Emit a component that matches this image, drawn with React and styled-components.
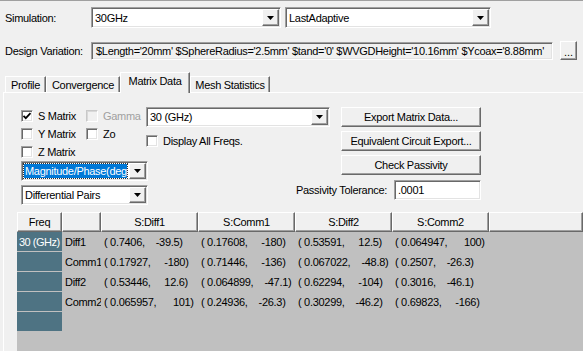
import React from 'react';
import styled, { createGlobalStyle, css } from 'styled-components';

const GlobalStyle = createGlobalStyle`
  html, body { margin: 0; padding: 0; background: #f0f0f0; }
  body {
    font-family: "Liberation Sans", Arial, sans-serif;
    font-size: 11px;
    letter-spacing: -0.3px;
    color: #000;
  }
  * { box-sizing: border-box; }
`;

const sunken = css`
  border: 1px solid;
  border-color: #a0a0a0 #fff #fff #a0a0a0;
  box-shadow: inset 1px 1px #696969, inset -1px -1px #e3e3e3;
`;

const raised = css`
  background: #f0f0f0;
  border: 1px solid;
  border-color: #fff #696969 #696969 #fff;
  box-shadow: inset -1px -1px #a0a0a0;
`;

const Window = styled.div`
  width: 583px;
  height: 351px;
  overflow: hidden;
  display: flex;
  flex-direction: column;
  background: #f0f0f0;
  border-top: 1px solid #a0a0a0;
`;

const FieldRow = styled.div`
  display: flex;
  align-items: center;
  flex: none;
  height: ${(p) => p.$h}px;
  margin-top: ${(p) => p.$top}px;
  padding-left: 5px;
`;

const Label = styled.span`
  width: 86px;
  flex: none;
  white-space: nowrap;
`;

const Combo = styled.div`
  ${sunken};
  display: flex;
  flex: none;
  width: ${(p) => p.$w}px;
  height: ${(p) => p.$h || 21}px;
  margin-right: ${(p) => p.$mr || 0}px;
  padding: 1px;
  background: #fff;
`;

const ComboText = styled.div`
  flex: 1;
  min-width: 0;
  display: flex;
  align-items: center;
  padding-left: 2px;
  white-space: nowrap;
  overflow: hidden;
  ${(p) =>
    p.$selected &&
    css`
      margin: 1px 2px 1px 1px;
      padding-left: 1px;
      background: #0078d7;
      color: #fff;
      outline: 1px dotted #333;
    `}
`;

const DropButton = styled.div`
  ${raised};
  width: 17px;
  flex: none;
  display: flex;
  align-items: center;
  justify-content: center;
`;

const ReadOnlyField = styled.div`
  ${sunken};
  width: 462px;
  height: 18px;
  flex: none;
  display: flex;
  align-items: center;
  padding-left: 4px;
  white-space: nowrap;
  overflow: hidden;
  background: #f0f0f0;
`;

const SmallButton = styled.button`
  ${raised};
  font: inherit;
  letter-spacing: 0;
  color: #000;
  width: 17px;
  height: 19px;
  margin-left: 7px;
  padding: 2px 0 0;
  line-height: 14px;
`;

const TabStrip = styled.div`
  display: flex;
  align-items: flex-end;
  flex: none;
  height: 20px;
  margin-top: 12px;
  padding-left: 5px;
`;

const Tab = styled.div`
  width: ${(p) => p.$w}px;
  height: 16px;
  display: flex;
  align-items: center;
  justify-content: center;
  padding-top: 1px;
  background: #f0f0f0;
  border-top: 1px solid #fff;
  border-left: 1px solid #fff;
  border-right: 1px solid #696969;
  box-shadow: inset -1px 0 #a0a0a0;
  white-space: nowrap;
  ${(p) =>
    p.$active &&
    css`
      height: 21px;
      margin-bottom: -1px;
      padding: 0 0 5px;
      position: relative;
      z-index: 1;
    `}
`;

const Panel = styled.div`
  flex: 1;
  display: flex;
  flex-direction: column;
  margin-left: 3px;
  border-top: 1px solid #fff;
  border-left: 1px solid #fff;
`;

const Controls = styled.div`
  display: flex;
  flex: none;
  padding: 14px 0 0 17px;
`;

const LeftCol = styled.div`
  width: 125px;
  flex: none;
  display: flex;
  flex-direction: column;
`;

const CheckGrid = styled.div`
  display: grid;
  grid-template-columns: 65px auto;
  grid-auto-rows: 18px;
`;

const Check = styled.label`
  display: flex;
  align-items: center;
  gap: 5px;
  white-space: nowrap;
  color: ${(p) => (p.$disabled ? '#a0a0a0' : '#000')};
  ${(p) =>
    p.$span &&
    css`
      grid-column: 1 / -1;
    `}
  ${(p) =>
    p.$center &&
    css`
      align-self: center;
    `}
`;

const Box = styled.span`
  ${sunken};
  width: 12px;
  height: 12px;
  flex: none;
  display: flex;
  align-items: center;
  justify-content: center;
  background: ${(p) => (p.$disabled ? '#f0f0f0' : '#fff')};
  ${(p) =>
    p.$disabled &&
    css`
      border-color: #c8c8c8 #fff #fff #c8c8c8;
      box-shadow: inset 1px 1px #d8d8d8;
    `}
`;

const StackedCombo = styled(Combo)`
  margin-top: ${(p) => p.$mt}px;
  height: 20px;
`;

const MidRight = styled.div`
  display: grid;
  grid-template-columns: 184px 140px;
  grid-auto-rows: 20px;
  column-gap: 11px;
  row-gap: 4px;
  align-content: start;
`;

const Button = styled.button`
  ${raised};
  font: inherit;
  letter-spacing: inherit;
  color: #000;
  width: 100%;
  height: 20px;
  padding: 0;
  grid-column: 2;
`;

const ToleranceRow = styled.div`
  grid-column: 1 / -1;
  justify-self: end;
  display: flex;
  align-items: center;
  gap: 7px;
  margin-top: 1px;
`;

const Input = styled.div`
  ${sunken};
  width: 87px;
  height: 20px;
  display: flex;
  align-items: center;
  padding-left: 3px;
  background: #fff;
`;

const Table = styled.div`
  flex: 1;
  margin: 7px 0 0 13px;
  background: #c0c0c0;
  display: flex;
  flex-direction: column;
  overflow: hidden;
`;

const Row = styled.div`
  display: flex;
  flex: none;
  height: 20px;
`;

const HeadCell = styled.div`
  ${raised};
  width: ${(p) => (p.$w ? `${p.$w}px` : 'auto')};
  flex: ${(p) => (p.$w ? 'none' : '1')};
  display: flex;
  align-items: center;
  justify-content: center;
  white-space: nowrap;
`;

const FreqCell = styled.div`
  width: 45px;
  flex: none;
  display: flex;
  align-items: center;
  padding-left: 2px;
  background: #4e7383;
  color: #fff;
  letter-spacing: -0.5px;
  border-bottom: 1px solid #c0c0c0;
  white-space: nowrap;
`;

const Cell = styled.div`
  width: ${(p) => p.$w}px;
  flex: none;
  display: flex;
  align-items: center;
  padding-left: 3px;
  white-space: pre;
  overflow: hidden;
`;

const Arrow = () => (
  <svg width="7" height="4" viewBox="0 0 7 4">
    <polygon points="0,0 7,0 3.5,4" fill="#000" />
  </svg>
);

const Tick = () => (
  <svg width="10" height="10" viewBox="0 0 10 10">
    <path d="M1.5 4.8 L3.8 7.2 L8.5 2.2" fill="none" stroke="#000" strokeWidth="1.8" />
  </svg>
);

const DropDown = ({ w, h, mr, text, selected }) => (
  <Combo $w={w} $h={h} $mr={mr}>
    <ComboText $selected={selected}>{text}</ComboText>
    <DropButton>
      <Arrow />
    </DropButton>
  </Combo>
);

const CheckBox = ({ label, checked, disabled, span, center }) => (
  <Check $disabled={disabled} $span={span} $center={center}>
    <Box $disabled={disabled}>{checked && <Tick />}</Box>
    {label}
  </Check>
);

const columns = ['S:Diff1', 'S:Comm1', 'S:Diff2', 'S:Comm2'];
const data = [
  ['Diff1', [['0.7406', '-39.5'], ['0.17608', '-180'], ['0.53591', '12.5'], ['0.064947', '100']]],
  ['Comm1', [['0.17927', '-180'], ['0.71446', '-136'], ['0.067022', '-48.8'], ['0.2507', '-26.3']]],
  ['Diff2', [['0.53446', '12.6'], ['0.064899', '-47.1'], ['0.62294', '-104'], ['0.3016', '-46.1']]],
  ['Comm2', [['0.065957', '101'], ['0.24936', '-26.3'], ['0.30299', '-46.2'], ['0.69823', '-166']]],
];
const fmt = ([m, p]) => `( ${m},${' '.repeat(9 - p.length)}${p})`;

const tabs = [
  ['Profile', 41],
  ['Convergence', 74],
  ['Matrix Data', 70],
  ['Mesh Statistics', 80],
];

export default function App() {
  return (
    <>
      <GlobalStyle />
      <Window>
        <FieldRow $h={21} $top={6}>
          <Label>Simulation:</Label>
          <DropDown w={190} mr={4} text="30GHz" />
          <DropDown w={206} text="LastAdaptive" />
        </FieldRow>
        <FieldRow $h={19} $top={13}>
          <Label>Design Variation:</Label>
          <ReadOnlyField>
            $Length='20mm' $SphereRadius='2.5mm' $tand='0' $WVGDHeight='10.16mm' $Ycoax='8.88mm'
          </ReadOnlyField>
          <SmallButton>...</SmallButton>
        </FieldRow>
        <TabStrip>
          {tabs.map(([name, w]) => (
            <Tab key={name} $w={w} $active={name === 'Matrix Data'}>
              {name}
            </Tab>
          ))}
        </TabStrip>
        <Panel>
          <Controls>
            <LeftCol>
              <CheckGrid>
                <CheckBox label="S Matrix" checked />
                <CheckBox label="Gamma" disabled />
                <CheckBox label="Y Matrix" />
                <CheckBox label="Zo" />
                <CheckBox label="Z Matrix" span />
              </CheckGrid>
              <StackedCombo as="div" $w={127} $mt={0}>
                <ComboText $selected>Magnitude/Phase(deg)</ComboText>
                <DropButton>
                  <Arrow />
                </DropButton>
              </StackedCombo>
              <StackedCombo as="div" $w={127} $mt={4}>
                <ComboText>Differential Pairs</ComboText>
                <DropButton>
                  <Arrow />
                </DropButton>
              </StackedCombo>
            </LeftCol>
            <MidRight>
              <DropDown w={184} h={20} text="30 (GHz)" />
              <Button>Export Matrix Data...</Button>
              <CheckBox label="Display All Freqs." center />
              <Button>Equivalent Circuit Export...</Button>
              <Button>Check Passivity</Button>
              <ToleranceRow>
                Passivity Tolerance:
                <Input>.0001</Input>
              </ToleranceRow>
            </MidRight>
          </Controls>
          <Table>
            <Row>
              <HeadCell $w={45}>Freq</HeadCell>
              <HeadCell $w={39} />
              {columns.map((c) => (
                <HeadCell key={c} $w={97}>
                  {c}
                </HeadCell>
              ))}
              <HeadCell />
            </Row>
            {data.map(([name, vals], i) => (
              <Row key={name}>
                <FreqCell>{i === 0 ? '30 (GHz)' : ''}</FreqCell>
                <Cell $w={39}>{name}</Cell>
                {vals.map((v, j) => (
                  <Cell key={j} $w={97}>
                    {fmt(v)}
                  </Cell>
                ))}
              </Row>
            ))}
            <Row>
              <FreqCell />
            </Row>
          </Table>
        </Panel>
      </Window>
    </>
  );
}
